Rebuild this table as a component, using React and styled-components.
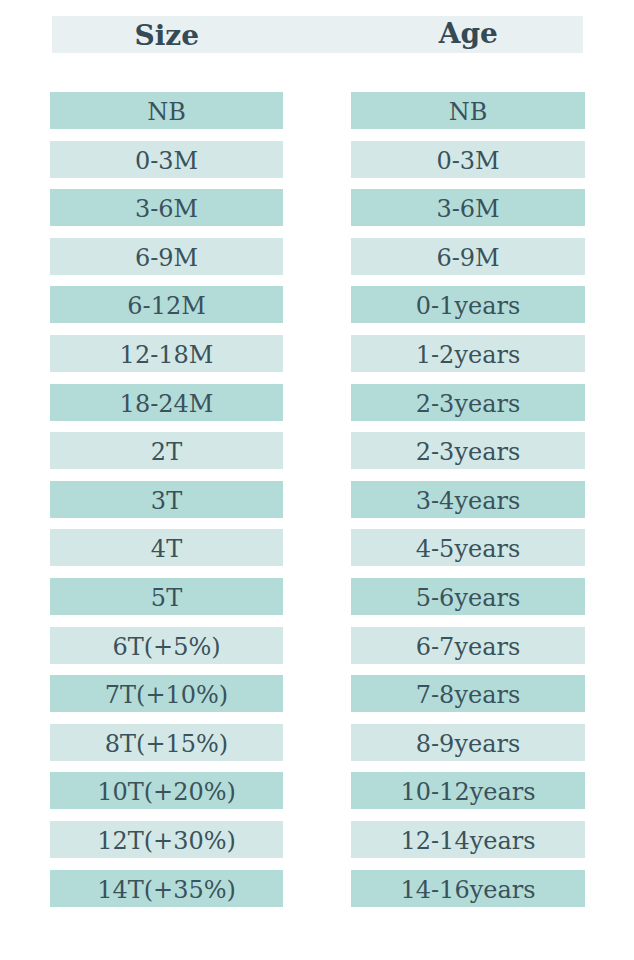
import React from 'react';
import styled, { createGlobalStyle } from 'styled-components';

const GlobalStyle = createGlobalStyle`
  body {
    margin: 0;
    background: #ffffff;
    font-family: "DejaVu Serif", "Liberation Serif", serif;
  }
`;

const Page = styled.div`
  width: 634px;
  height: 960px;
  box-sizing: border-box;
  padding: 16px 49px 0 50px;
  background: #ffffff;
`;

const Header = styled.div`
  margin: 0 2px 39px 2px;
  height: 37px;
  background: #e9f0f2;
  display: grid;
  grid-template-columns: 1fr 1fr;
  align-items: center;
`;

const HeaderCell = styled.div`
  font-weight: bold;
  font-size: 28px;
  color: #344a55;
  text-align: center;
  line-height: 37px;
  padding-left: ${({ right }) => (right ? '36px' : '0')};
  padding-right: ${({ right }) => (right ? '0' : '36px')};
  margin-top: ${({ right }) => (right ? '-4px' : '1px')};
`;

const Table = styled.div`
  display: grid;
  grid-template-columns: 233px 234px;
  column-gap: 68px;
  row-gap: 11.6px;
`;

const Cell = styled.div`
  height: 37px;
  background: ${({ dark }) => (dark ? '#b3dcd9' : '#d3e8e6')};
  color: #3a525b;
  font-size: 24px;
  display: flex;
  align-items: center;
  justify-content: center;
  padding-top: 3px;
  box-sizing: border-box;
`;

const rows = [
  ['NB', 'NB'],
  ['0-3M', '0-3M'],
  ['3-6M', '3-6M'],
  ['6-9M', '6-9M'],
  ['6-12M', '0-1years'],
  ['12-18M', '1-2years'],
  ['18-24M', '2-3years'],
  ['2T', '2-3years'],
  ['3T', '3-4years'],
  ['4T', '4-5years'],
  ['5T', '5-6years'],
  ['6T(+5%)', '6-7years'],
  ['7T(+10%)', '7-8years'],
  ['8T(+15%)', '8-9years'],
  ['10T(+20%)', '10-12years'],
  ['12T(+30%)', '12-14years'],
  ['14T(+35%)', '14-16years'],
];

export default function App() {
  return (
    <>
      <GlobalStyle />
      <Page>
        <Header>
          <HeaderCell>Size</HeaderCell>
          <HeaderCell right>Age</HeaderCell>
        </Header>
        <Table>
          {rows.map(([size, age], i) => (
            <React.Fragment key={i}>
              <Cell dark={i % 2 === 0}>{size}</Cell>
              <Cell dark={i % 2 === 0}>{age}</Cell>
            </React.Fragment>
          ))}
        </Table>
      </Page>
    </>
  );
}
